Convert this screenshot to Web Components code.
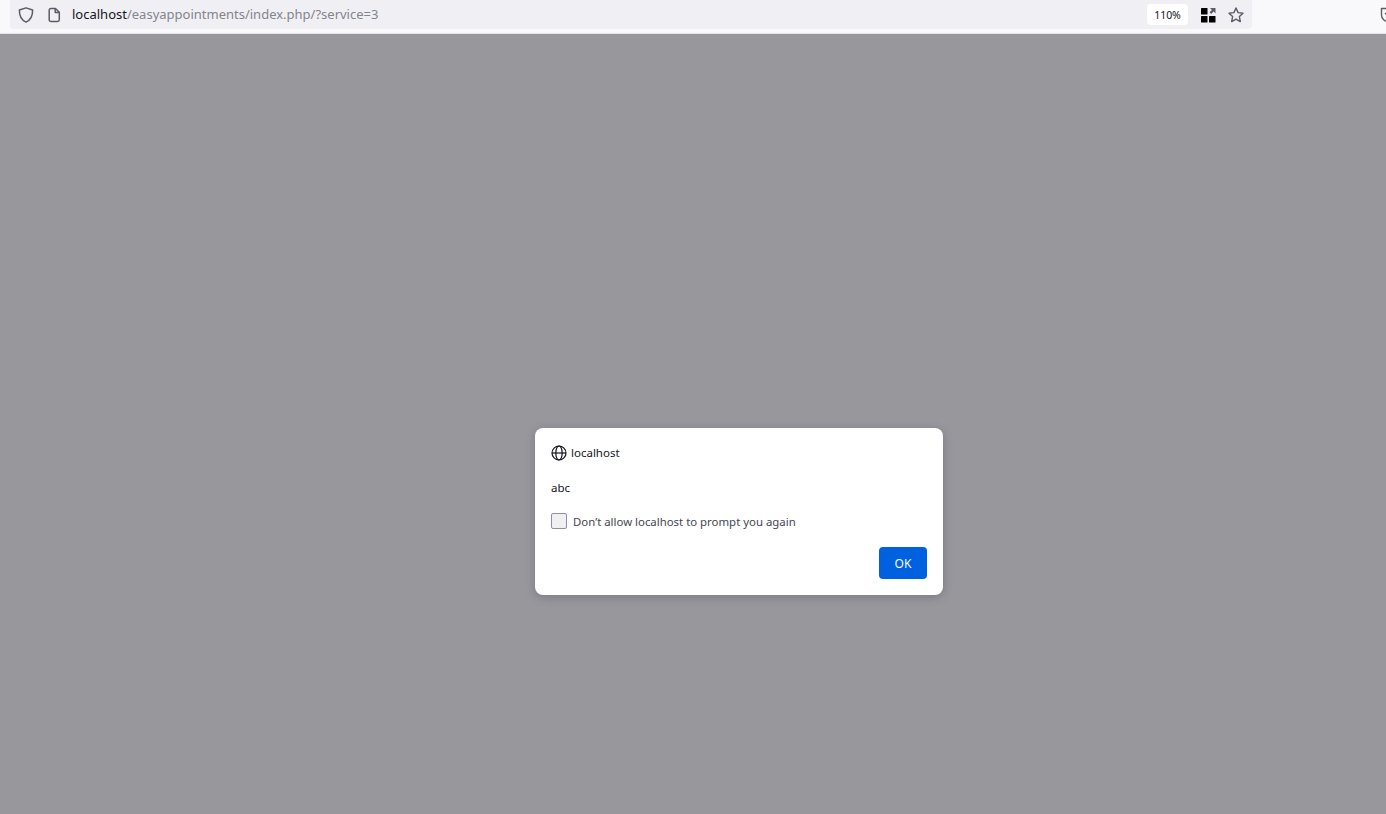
<!DOCTYPE html>
<html lang="en">
<head>
<meta charset="utf-8">
<title>localhost</title>
<style>
  html, body { margin: 0; height: 100%; overflow: hidden; }
  body { display: flex; flex-direction: column; font-family: "Noto Sans", "Open Sans", sans-serif; }
</style>
</head>
<body>
<browser-toolbar url-host="localhost" url-path="/easyappointments/index.php/?service=3" zoom="110%"></browser-toolbar>
<prompt-backdrop>
  <prompt-dialog origin="localhost" message="abc" suppress="Don’t allow localhost to prompt you again" action="OK"></prompt-dialog>
</prompt-backdrop>

<script>
class BrowserToolbar extends HTMLElement {
  constructor() {
    super();
    this.attachShadow({ mode: 'open' });
    this.shadowRoot.innerHTML = `
      <style>
        :host {
          display: flex;
          flex: none;
          height: 33px;
          background: #f9f9fb;
          border-bottom: 1px solid #e4e4e7;
          color: #15141a;
        }
        #bar {
          display: flex;
          align-items: center;
          box-sizing: border-box;
          width: 1242px;
          height: 29px;
          margin-left: 10px;
          padding: 0 5px 0 8px;
          background: #f0f0f4;
          border-radius: 0 0 4px 4px;
        }
        #shield { margin-right: 12px; }
        #page { margin-right: 10px; }
        #url { flex: 1; font-size: 13px; white-space: nowrap; padding-bottom: 1px; }
        #url span { color: #84848c; }
        #zoom {
          display: flex;
          align-items: center;
          justify-content: center;
          width: 41px;
          height: 21px;
          margin-right: 12px;
          background: #fff;
          border-radius: 4px;
          font-size: 10.500px;
          letter-spacing: -0.1px;
        }
        #apps { margin-right: 12px; }
        #star { margin-right: 3px; }
        #edge {
          flex: 1;
          display: flex;
          justify-content: flex-end;
          overflow: hidden;
          padding-top: 7px;
        }
        svg { display: block; flex: none; }
      </style>
      <div id="bar">
        <svg id="shield" width="16" height="16" viewBox="0 0 16 16" fill="none" stroke="#5b5b66" stroke-width="1.500">
          <path d="M8 .9 14.600 3c.2 5.600-1.900 9.900-6.600 12.100C3.300 12.900 1.200 8.600 1.400 3z" stroke-linejoin="round"/>
        </svg>
        <svg id="page" width="16" height="16" viewBox="0 0 16 16" fill="none" stroke="#5b5b66" stroke-width="1.500">
          <path d="M3.200 3.200A1.700 1.700 0 0 1 4.900 1.500H9.500L13.300 5.300V12.800A1.700 1.700 0 0 1 11.600 14.500H4.900A1.700 1.700 0 0 1 3.200 12.800zM9.200 1.500V5.600H13.300" stroke-linejoin="round"/>
        </svg>
        <div id="url">${this.getAttribute('url-host')}<span>${this.getAttribute('url-path')}</span></div>
        <div id="zoom">${this.getAttribute('zoom')}</div>
        <svg id="apps" width="16" height="16" viewBox="0 0 16 16" fill="#000">
          <rect x="1" y="1" width="6.500" height="6.500" rx=".5"/>
          <rect x="1" y="9" width="6.500" height="6.500" rx=".5"/>
          <rect x="9" y="9" width="6.500" height="6.500" rx=".5"/>
          <path d="M10 1H15.500V6.500L13.600 4.600 11.200 7 9.500 5.300 11.900 2.900z" fill="#5b5b66"/>
        </svg>
        <svg id="star" width="16" height="16" viewBox="0 0 16 16" fill="none" stroke="#5b5b66" stroke-width="1.400">
          <path d="M8 1 10.100 5.600 15 6.200 11.400 9.600 12.300 14.600 8 12.100 3.700 14.600 4.600 9.600 1 6.200 5.900 5.600z" stroke-linejoin="round"/>
        </svg>
      </div>
      <div id="edge">
        <svg width="16" height="16" viewBox="0 0 16 16" fill="none" stroke="#5b5b66" stroke-width="1.400" style="margin-right:-10px">
          <path d="M1.500 1.500H14.500V8C14.500 12 11 14.500 8 14.500S1.500 12 1.500 8z" stroke-linejoin="round"/>
          <path d="M5 6 8 9 11 6"/>
        </svg>
      </div>
    `;
  }
}

class PromptBackdrop extends HTMLElement {
  constructor() {
    super();
    this.attachShadow({ mode: 'open' });
    this.shadowRoot.innerHTML = `
      <style>
        :host {
          display: flex;
          flex: 1;
          align-items: flex-start;
          box-sizing: border-box;
          padding: 394px 0 0 535px;
          background: #98979c;
        }
      </style>
      <slot></slot>
    `;
  }
}

class PromptDialog extends HTMLElement {
  constructor() {
    super();
    this.attachShadow({ mode: 'open' });
    this.shadowRoot.innerHTML = `
      <style>
        :host {
          display: flex;
          flex-direction: column;
          box-sizing: border-box;
          width: 408px;
          height: 167px;
          padding: 16px;
          background: #fff;
          border-radius: 8px;
          box-shadow: 0 2px 10px rgba(58, 57, 68, 0.3);
          color: #15141a;
          font-size: 11.500px;
        }
        header { display: flex; align-items: center; gap: 4px; height: 17px; }
        #message { margin-top: 18px; height: 17px; line-height: 17px; }
        label { display: flex; align-items: center; gap: 6px; margin-top: 17px; color: #45454f; font-size: 11.400px; }
        #box {
          box-sizing: border-box;
          width: 16px;
          height: 16px;
          background: #f0f0f4;
          border: 1px solid #8f8f9d;
          border-radius: 2px;
        }
        footer { display: flex; justify-content: flex-end; margin-top: 18px; }
        button {
          width: 48px;
          height: 32px;
          padding: 0;
          border: 0;
          border-radius: 4px;
          background: #0061e0;
          color: #fbfbfe;
          font: inherit;
          font-size: 12px;
        }
        svg { display: block; }
      </style>
      <header>
        <svg width="16" height="16" viewBox="0 0 16 16" fill="none" stroke="#15141a" stroke-width="1.200">
          <circle cx="8" cy="8" r="7"/>
          <ellipse cx="8" cy="8" rx="3.200" ry="7"/>
          <path d="M1 8H15"/>
        </svg>
        <span>${this.getAttribute('origin')}</span>
      </header>
      <div id="message">${this.getAttribute('message')}</div>
      <label><span id="box"></span><span>${this.getAttribute('suppress')}</span></label>
      <footer><button>${this.getAttribute('action')}</button></footer>
    `;
  }
}

customElements.define('browser-toolbar', BrowserToolbar);
customElements.define('prompt-backdrop', PromptBackdrop);
customElements.define('prompt-dialog', PromptDialog);
</script>
</body>
</html>
